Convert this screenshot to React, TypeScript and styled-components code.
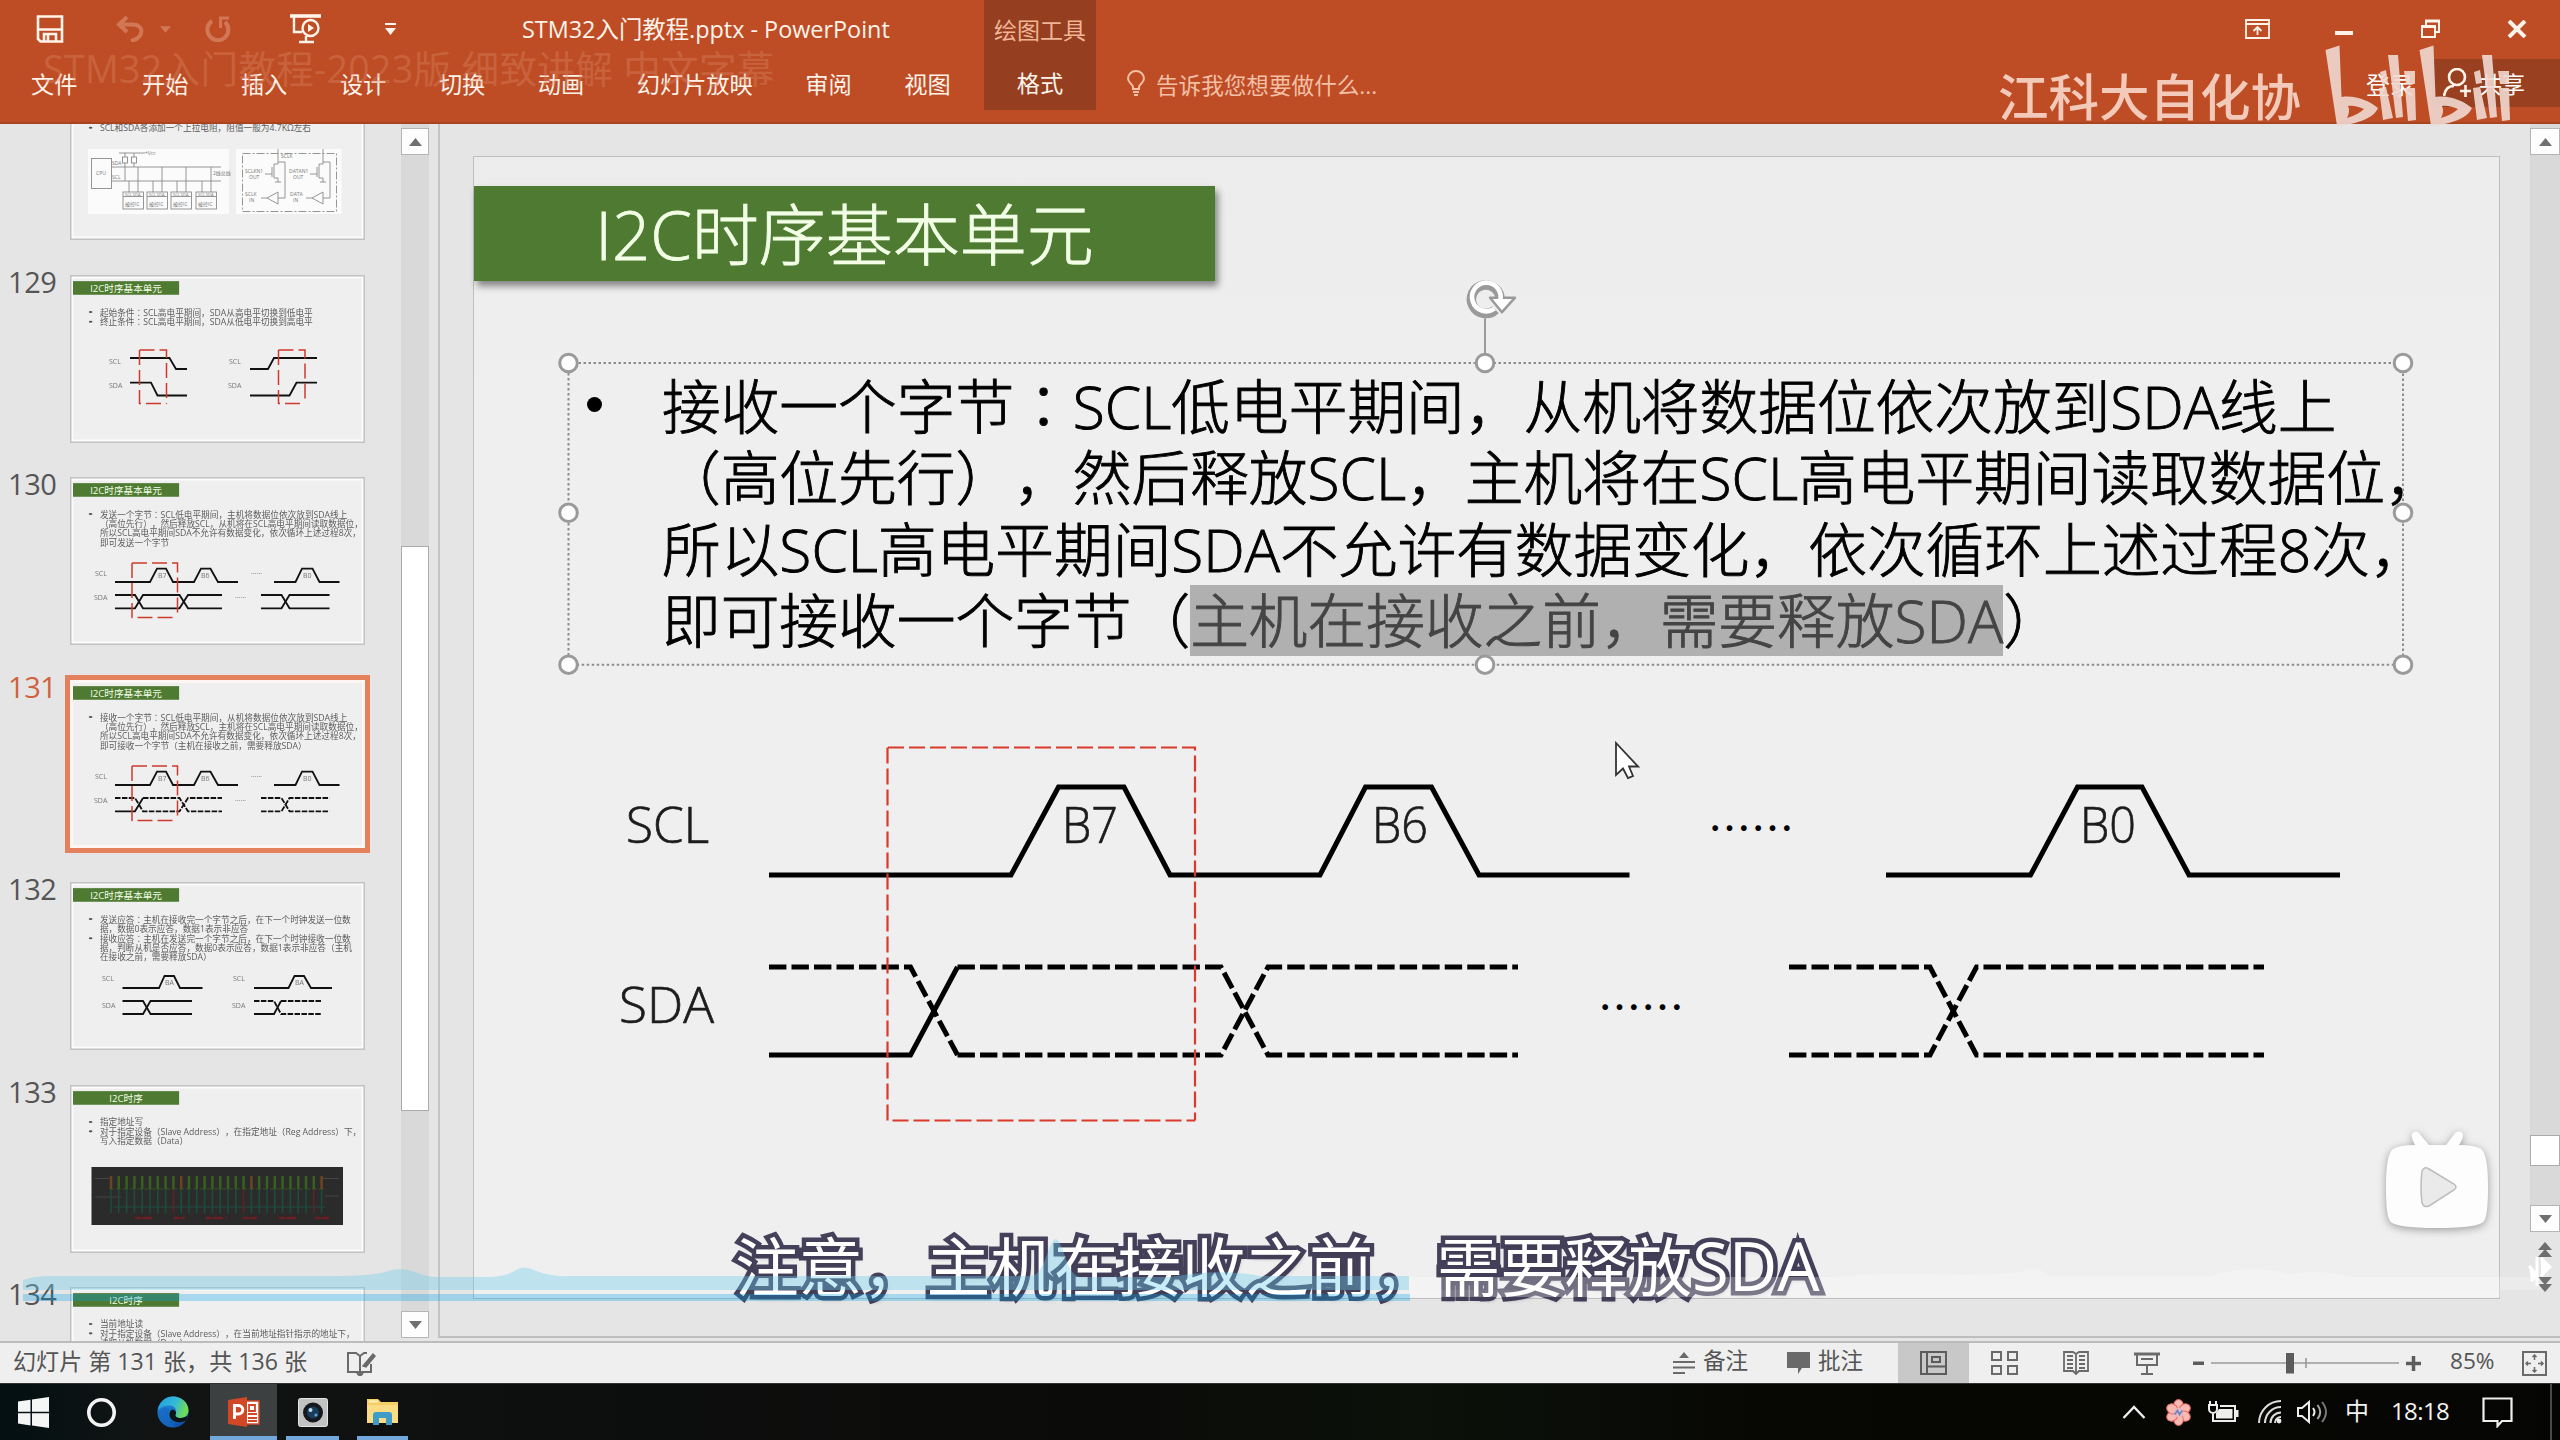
import React from 'react';
import styled, { createGlobalStyle, css } from 'styled-components';

const UI = `"Open Sans", "Noto Sans CJK SC", sans-serif`;

const Global = createGlobalStyle`
  * { box-sizing: border-box; }
  html, body { margin: 0; padding: 0; background: #e5e5e5; }
  body { font-family: ${UI}; text-spacing-trim: space-all; overflow: hidden; }
  svg { display: block; flex: none; }
`;

const Screen = styled.div`
  position: relative;
  width: 2560px;
  height: 1440px;
  display: flex;
  flex-direction: column;
  overflow: hidden;
  background: #e5e5e5;
`;

/* ---------- header ---------- */
const Header = styled.header`
  display: grid;
  grid-template-columns: 984px 112px 1fr;
  height: 124px;
  flex: none;
  background: #be4d25;
  border-bottom: 2px solid #a84420;
  color: #fff3ea;
`;
const HeaderColumn = styled.div`
  display: flex;
  flex-direction: column;
  min-width: 0;
`;
const TitleRow = styled.div`
  display: flex;
  align-items: center;
  height: 58px;
  padding-left: 36px;
`;
const QuickAccess = styled.div`
  display: flex;
  align-items: center;
  width: 486px;
`;
const QuickIcon = styled.div<{ $gap: number; $dim?: boolean }>`
  margin-right: ${p => p.$gap}px;
  opacity: ${p => (p.$dim ? 0.3 : 1)};
`;
const DocTitle = styled.div`
  font-size: 23.4px;
  line-height: 34px;
  padding-bottom: 1px;
  white-space: nowrap;
`;
const TabRow = styled.nav`
  display: flex;
  align-items: center;
  height: 50px;
  padding-left: 31px;
  gap: 52.6px;
`;
const Tab = styled.div<{ $after?: number }>`
  font-size: 23.2px;
  white-space: nowrap;
  margin-right: ${p => p.$after ?? 0}px;
`;
const ContextTab = styled.div`
  display: flex;
  flex-direction: column;
  align-items: center;
  height: 110px;
  background: #963e20;
`;
const ContextLabel = styled.div`
  height: 58px;
  line-height: 60px;
  font-size: 23px;
  color: #f0b597;
`;
const ContextName = styled.div`
  height: 50px;
  line-height: 50px;
  font-size: 23.2px;
`;
const WindowRow = styled.div`
  display: flex;
  justify-content: flex-end;
  align-items: center;
  height: 58px;
  padding-right: 33px;
`;
const WindowButton = styled.div<{ $gap: number }>`
  margin-right: ${p => p.$gap}px;
`;
const TellRow = styled.div`
  display: flex;
  align-items: center;
  height: 50px;
  padding-left: 29px;
  color: #f3bfa5;
  font-size: 22.6px;
`;
const TellText = styled.div`
  margin-left: 9px;
  padding-top: 2px;
  white-space: nowrap;
`;
const SignIn = styled.div`
  margin-left: auto;
  width: 66px;
  color: #fff;
  font-size: 24px;
`;
const Share = styled.div`
  display: flex;
  align-items: center;
  gap: 8px;
  width: 128px;
  height: 48px;
  padding-left: 11px;
  background: #98401f;
  color: #fff;
  font-size: 23px;
`;

/* ---------- workspace ---------- */
const Workspace = styled.main`
  display: flex;
  height: 1219px;
  flex: none;
  background: #e5e5e5;
  border-bottom: 2px solid #bcbcbc;
`;
const ThumbPane = styled.aside`
  width: 401px;
  flex: none;
  height: 100%;
  overflow: hidden;
`;
const ThumbList = styled.div`
  display: flex;
  flex-direction: column;
  margin-top: -52px;
`;
const ThumbRow = styled.div`
  display: flex;
  height: 202.5px;
  flex: none;
`;
const ThumbNumber = styled.div<{ $on?: boolean }>`
  width: 70px;
  padding-left: 8px;
  font-size: 29px;
  line-height: 14px;
  letter-spacing: -0.4px;
  color: ${p => (p.$on ? '#d0623f' : '#555')};
  flex: none;
`;
const ThumbFrame = styled.div<{ $on?: boolean }>`
  position: relative;
  width: 295px;
  height: 168px;
  flex: none;
  overflow: visible;
  padding: 2px 2px 2px 3px;
  background: #efefef;
  box-shadow: inset 0 0 0 1.5px #c2c2c2, inset 0 0 0 3.5px #fbfbfb;
  ${p =>
    p.$on &&
    css`
      box-shadow: inset 0 0 0 3px #fdf6f2, 0 0 0 5px #e4815c;
    `}
`;
const ThumbClip = styled.div`
  width: 290px;
  height: 163px;
  overflow: hidden;
`;
const ThumbScale = styled.div`
  width: 2026px;
  height: 1142px;
  transform: scale(0.1432);
  transform-origin: 0 0;
`;
const ThumbDrawing = styled.svg`
  position: absolute;
  left: 3px;
  top: 2px;
`;

const ScrollBar = styled.div<{ $w: number; $h: number }>`
  display: flex;
  flex-direction: column;
  width: ${p => p.$w}px;
  height: ${p => p.$h}px;
  flex: none;
  background: #d9d9d9;
  padding-top: 4px;
`;
const ScrollButton = styled.div`
  display: flex;
  align-items: center;
  justify-content: center;
  height: 27px;
  flex: none;
  background: #fdfdfd;
  border: 1.5px solid #b5b5b5;
`;
const ScrollThumb = styled.div<{ $before: number; $size: number }>`
  height: ${p => p.$size}px;
  margin-top: ${p => p.$before}px;
  margin-bottom: auto;
  flex: none;
  background: #fff;
  border: 1.5px solid #ababab;
`;

const Editor = styled.section`
  display: flex;
  flex: 1;
  margin-left: 9px;
  height: 1214px;
  border-left: 2px solid #c4c4c4;
  border-bottom: 2px solid #bdbdbd;
`;
const Stage = styled.div`
  flex: 1;
  padding: 32px 0 0 33px;
`;
const SlidePaper = styled.div`
  width: 2027px;
  height: 1143px;
  border: 1.5px solid #bfbfbf;
  background: linear-gradient(#ececec, #efefef 20%);
`;
const RightRail = styled.div`
  display: flex;
  flex-direction: column;
  align-items: center;
  width: 30px;
`;
const PageArrows = styled.div`
  margin-top: 10px;
`;

/* ---------- slide ---------- */
const SlideBox = styled.div`
  display: flex;
  flex-direction: column;
  width: 2025px;
  height: 1140px;
`;
const SlideTitle = styled.div<{ $mini?: boolean }>`
  margin-top: 29px;
  width: 741px;
  height: 95px;
  flex: none;
  background: #4f7a32;
  box-shadow: ${p => (p.$mini ? 'none' : '3px 5px 7px rgba(0,0,0,0.45)')};
  color: #f2ffe6;
  font-size: 67px;
  line-height: 97px;
  font-weight: ${p => (p.$mini ? 400 : 300)};
  -webkit-text-stroke: ${p => (p.$mini ? 0 : 0.8)}px #f2ffe6;
  text-align: center;
  white-space: nowrap;
`;
const BodyBox = styled.div`
  position: relative;
  margin: 82px 0 0 94px;
  padding: 5px 0 0 94px;
  width: 1836px;
  height: 302px;
  flex: none;
`;
const Paragraph = styled.div<{ $mini?: boolean }>`
  position: relative;
  font-size: ${p => (p.$mini ? 60.4 : 58.7)}px;
  line-height: ${p => (p.$mini ? 65.3 : 71.3)}px;
  font-weight: ${p => (p.$mini ? 400 : 300)};
  color: ${p => (p.$mini ? '#5c5c5c' : '#000')};
  -webkit-text-stroke: ${p => (p.$mini ? '0' : '0.9px currentColor')};
  white-space: nowrap;
`;
const BulletDot = styled.span<{ $mini?: boolean }>`
  position: absolute;
  left: ${p => (p.$mini ? -78 : -75)}px;
  top: ${p => (p.$mini ? 26 : 29)}px;
  width: ${p => (p.$mini ? 26 : 15)}px;
  height: 15px;
  border-radius: 50%;
  background: ${p => (p.$mini ? '#555' : '#000')};
`;
const Line = styled.div``;
const Colon = styled.span`
  font-family: "Noto Sans CJK JP", sans-serif;
`;
const Highlight = styled.span`
  display: inline-block;
  height: 71px;
  background: #b0b0b0;
  color: #444;
  vertical-align: top;
`;
const SelectionFrame = styled.svg`
  position: absolute;
  left: -20px;
  top: -90px;
`;

const mark = (text: string) =>
  text.split('：').flatMap((part, i) => (i ? [<Colon key={i}>：</Colon>, part] : [part]));

type SlideProps = { title: string; items: React.ReactNode[][]; mini?: boolean; children?: React.ReactNode; frame?: React.ReactNode };
const Slide = ({ title, items, mini, children, frame }: SlideProps) => (
  <SlideBox>
    <SlideTitle $mini={mini}>{title}</SlideTitle>
    <BodyBox>
      {items.map((lines, i) => (
        <Paragraph key={i} $mini={mini}>
          <BulletDot $mini={mini} />
          {lines.map((l, j) => (
            <Line key={j}>{typeof l === 'string' ? mark(l) : l}</Line>
          ))}
        </Paragraph>
      ))}
      {frame}
    </BodyBox>
    {children}
  </SlideBox>
);

const handles = [
  [568.5, 362.8], [1485, 362.8], [2403, 362.8],
  [568.5, 512.6], [2403, 512.6],
  [568.5, 664.5], [1485, 664.5], [2403, 664.5],
];
const Frame = () => (
  <SelectionFrame width="1880" height="420" viewBox="548 272.8 1880 420" fill="none">
    <rect x="568.5" y="362.8" width="1834.5" height="301.7" stroke="#8d8d8d" strokeWidth="2" strokeDasharray="2.5 2.5" />
    <path d="M1485 318V354" stroke="#9a9a9a" strokeWidth="2" />
    <path d="M1500 300A14.300 14.300 0 1 0 1495.500 309.500" stroke="#9a9a9a" strokeWidth="9.500" />
    <path d="M1490 297.500H1515L1502 312Z" fill="#fff" stroke="#9a9a9a" strokeWidth="2.500" strokeLinejoin="round" />
    <path d="M1500 301A14.300 14.300 0 1 0 1494.500 308.500" stroke="#fff" strokeWidth="4.600" />
    {handles.map(([x, y], i) => (
      <circle key={i} cx={x} cy={y} r="8.8" fill="#fff" stroke="#9a9a9a" strokeWidth="3" />
    ))}
  </SelectionFrame>
);

const WaveLabel = styled.text`
  font-family: ${UI};
  font-weight: 300;
  font-size: 50px;
  fill: #1c1c1c;
  stroke: #1c1c1c;
  stroke-width: 0.7px;
`;
const Dots = styled.text`
  font-family: "Noto Sans CJK SC", sans-serif;
  font-size: 43px;
  fill: #000;
`;
const Timing = () => (
  <svg width="2025" height="632" viewBox="474 664.5 2025 632" fill="none" stroke="#000" strokeWidth="5">
    <g stroke="none">
      <WaveLabel x="626" y="842" textLength="83" lengthAdjust="spacingAndGlyphs">SCL</WaveLabel>
      <WaveLabel x="619" y="1022" textLength="95" lengthAdjust="spacingAndGlyphs">SDA</WaveLabel>
      <WaveLabel x="1062" y="842" textLength="56" lengthAdjust="spacingAndGlyphs">B7</WaveLabel>
      <WaveLabel x="1372" y="842" textLength="56" lengthAdjust="spacingAndGlyphs">B6</WaveLabel>
      <WaveLabel x="2080" y="842" textLength="56" lengthAdjust="spacingAndGlyphs">B0</WaveLabel>
      <Dots x="1708" y="844">……</Dots>
      <Dots x="1598" y="1023">……</Dots>
    </g>
    <path d="M769 874.5H1011L1058.5 786.5H1124L1170 874.5H1320L1365.5 786.5H1431.5L1479 874.5H1629.5" />
    <path d="M1886 874.5H2030.5L2077.5 786.5H2142L2189 874.5H2340" />
    <path d="M769 1054.5H910.5L957.5 966.5" />
    <g strokeDasharray="17.4 5.1">
      <path d="M769 966.5H910.5L957.5 1054.5" />
      <path d="M957.5 966.5H1221L1268 1054.5H1518" />
      <path d="M957.5 1054.5H1221L1268 966.5H1518" />
      <path d="M1789 966.5H1930L1976.5 1054.5H2264" />
      <path d="M1789 1054.5H1930L1976.5 966.5H2264" />
    </g>
    <g stroke="#d93a2c" strokeWidth="2.2" strokeDasharray="16 5">
      <path d="M888 747H1195V1120" />
      <path d="M887.5 747V1120H1195" />
    </g>
  </svg>
);

/* ---------- thumbnail drawings, in thumbnail pixels ---------- */
const MiniLabel = styled.text<{ $size?: number }>`
  font-family: ${UI};
  font-size: ${p => p.$size ?? 7}px;
  fill: #777;
`;
type MiniText = [number, number, string];
const Mini = ({ lines = [], dashed = [], red = [], labels = [], children }: {
  lines?: string[]; dashed?: string[]; red?: number[][]; labels?: MiniText[]; children?: React.ReactNode;
}) => (
  <ThumbDrawing width="290" height="164" viewBox="0 0 290 164" fill="none">
    {labels.map(([x, y, t], i) => <MiniLabel key={i} x={x} y={y}>{t}</MiniLabel>)}
    {lines.map((d, i) => <path key={i} d={d} stroke="#111" strokeWidth="1.8" />)}
    {dashed.map((d, i) => <path key={i} d={d} stroke="#111" strokeWidth="1.8" strokeDasharray="5.5 1.4" />)}
    {red.map(([x, y, w, h], i) => (
      <g key={i} stroke="#d03a2c" strokeWidth="1.5" strokeDasharray="15 5">
        <path d={`M${x} ${y}H${x + w}V${y + h}`} />
        <path d={`M${x} ${y}V${y + h}H${x + w}`} />
      </g>
    ))}
    {children}
  </ThumbDrawing>
);

const sclLong = [
  'M42 103H77L84 89.7H93L100 103H121L128 89.7H137.5L145 103H165',
  'M201 103H222.5L229 89.7H239.5L246.5 103H266.5',
];
const longLabels: MiniText[] = [
  [22, 97, 'SCL'], [21, 121, 'SDA'], [85, 99, 'B7'], [128, 99, 'B6'], [230, 99, 'B0'], [178, 95, '……'], [162, 119, '……'],
];

const Draw128 = () => (
  <Mini>
    <rect x="15" y="75" width="141" height="65" fill="#fbfbfb" />
    <rect x="163" y="75" width="105.5" height="65" fill="#fbfbfb" />
    <g stroke="#8a8a8a" strokeWidth="0.9">
      <rect x="18.5" y="84.5" width="20" height="30" />
      <path d="M38 93H148M38 107H148M46 79H72M52 79V107M61 79V93" />
      <rect x="49.5" y="83" width="5" height="6" fill="#fbfbfb" />
      <rect x="58.5" y="83" width="5" height="6" fill="#fbfbfb" />
      {[50, 74, 98, 123].map(x => (
        <g key={x}>
          <rect x={x} y="118" width="20.5" height="17" />
          <path d={`M${x + 6} 107V118M${x + 15} 93V118M${x} 122.5H${x + 20}`} />
        </g>
      ))}
      <rect x="169.5" y="79.5" width="94" height="58" strokeDasharray="8 2 2 2" />
      {[0, 45].map(x => (
        <path key={x} d={`M${205 + x} 75V90H${201 + x}V104H${205 + x}V108M${192 + x} 100H${199 + x}M${199 + x} 93V103M${205 + x} 88H${212 + x}V124H${205 + x}M${205 + x} 118L${194 + x} 124L${205 + x} 130ZM${194 + x} 124H${188 + x}M${202 + x} 108H${208 + x}`} />
      ))}
    </g>
    {([[23, 101, 'CPU'], [39, 91, 'SDA'], [39, 105, 'SCL'], [72, 81, '+Vcc'], [140, 101, '2线总线']] as MiniText[]).map(([x, y, t], i) => (
      <MiniLabel key={i} x={x} y={y} $size={5}>{t}</MiniLabel>
    ))}
    {[50, 74, 98, 123].map(x => (
      <React.Fragment key={x}>
        <MiniLabel x={x + 2} y={122} $size={4}>SCL SDA</MiniLabel>
        <MiniLabel x={x + 2} y={132} $size={5}>被控IC</MiniLabel>
      </React.Fragment>
    ))}
    {([[172, 99, 'SCLKN1'], [176, 105, 'OUT'], [216, 99, 'DATAN1'], [220, 105, 'OUT'], [172, 122, 'SCLK'], [176, 128, 'IN'], [217, 122, 'DATA'], [220, 128, 'IN'], [208, 84, 'SCLK']] as MiniText[]).map(([x, y, t], i) => (
      <MiniLabel key={i} x={x} y={y} $size={5}>{t}</MiniLabel>
    ))}
  </Mini>
);

const Draw129 = () => (
  <Mini
    labels={[[36, 86.5, 'SCL'], [36, 110.5, 'SDA'], [156, 86.5, 'SCL'], [155, 110.5, 'SDA']]}
    lines={['M57 81H96.5L103 92H114', 'M57 105.7H78L84.5 118.5H114', 'M177 92H195L201 81H244', 'M177 118.5H216.5L223.5 105.7H244']}
    red={[[66.5, 73, 27, 53.5], [205.5, 73, 26.5, 53.5]]}
  />
);
const Draw130 = () => (
  <Mini
    labels={longLabels}
    lines={[
      ...sclLong,
      'M42 116H62L70 129.3H106.5L115 116H149', 'M42 129.3H62L70 116H106.5L115 129.3H149',
      'M188 116H208.5L216.5 129.3H256.5', 'M188 129.3H208.5L216.5 116H256.5',
    ]}
    red={[[59, 84, 45.5, 54.5]]}
  />
);
const Draw131 = () => (
  <Mini
    labels={longLabels}
    lines={[...sclLong, 'M42 129.3H62L70 116']}
    dashed={[
      'M42 116H62L70 129.3H106.5L115 116H149', 'M70 116H106.5L115 129.3H149',
      'M188 116H208.5L216.5 129.3H256.5', 'M188 129.3H208.5L216.5 116H256.5',
    ]}
    red={[[59, 84, 45.5, 54.5]]}
  />
);
const Draw132 = () => (
  <Mini
    labels={[[29, 97, 'SCL'], [29, 123.5, 'SDA'], [160, 97, 'SCL'], [159, 123.5, 'SDA'], [92, 101, 'BA'], [222, 101, 'BA']]}
    lines={[
      'M49.5 104H86L91.5 92H101L107 104H129.5', 'M181 104H215.5L221.5 92H231L238 104H259',
      'M49.5 117H70L77.5 130H119', 'M49.5 130H70L77.5 117H119', 'M181 130H201L208 117',
    ]}
    dashed={['M181 117H201L208 130H248', 'M208 117H248']}
  />
);
const ticks = Array.from({ length: 28 }, (_, i) => 38 + i * 7.8);
const Draw133 = () => (
  <Mini>
    <rect x="18.5" y="80" width="251.5" height="58" fill="#2b2b2c" />
    <path d="M22 91.5H36M250 91.5H266M22 110H48M252 109H266" stroke="#454545" />
    <path d="M36 102H252" stroke="#35521f" strokeDasharray="5 2" />
    <path d="M40 120H252" stroke="#1c4f42" strokeWidth="1.2" />
    {ticks.map((x, i) => (
      <g key={i}>
        <path d={`M${x} 89V102`} stroke={i % 9 === 0 ? '#6b4520' : '#38601f'} strokeWidth="2.5" />
        <path d={`M${x} 102V126`} stroke={i % 9 === 8 ? '#5a2525' : '#1c4c3a'} strokeWidth="1.6" />
      </g>
    ))}
    <path d="M62 131H82M101 131H112M133 131H154M170 131H184M206 131H226M242 131H256" stroke="#6b1f22" strokeWidth="2.5" strokeDasharray="6 1 10 3" />
  </Mini>
);

const T = 'I2C时序基本单元';
const thumbs: { n: string; title: string; items: string[][]; draw?: React.ReactNode; on?: boolean }[] = [
  { n: '128', title: 'I2C硬件电路', items: [['所有I2C设备的SCL连在一起，SDA连在一起'], ['设备的SCL和SDA均要配置成开漏输出模式'], ['SCL和SDA各添加一个上拉电阻，阻值一般为4.7KΩ左右']], draw: <Draw128 /> },
  { n: '129', title: T, items: [['起始条件：SCL高电平期间，SDA从高电平切换到低电平'], ['终止条件：SCL高电平期间，SDA从低电平切换到高电平']], draw: <Draw129 /> },
  { n: '130', title: T, items: [['发送一个字节：SCL低电平期间，主机将数据位依次放到SDA线上', '（高位先行），然后释放SCL，从机将在SCL高电平期间读取数据位，', '所以SCL高电平期间SDA不允许有数据变化，依次循环上述过程8次，', '即可发送一个字节']], draw: <Draw130 /> },
  { n: '131', title: T, items: [['接收一个字节：SCL低电平期间，从机将数据位依次放到SDA线上', '（高位先行），然后释放SCL，主机将在SCL高电平期间读取数据位，', '所以SCL高电平期间SDA不允许有数据变化，依次循环上述过程8次，', '即可接收一个字节（主机在接收之前，需要释放SDA）']], draw: <Draw131 />, on: true },
  { n: '132', title: T, items: [['发送应答：主机在接收完一个字节之后，在下一个时钟发送一位数', '据，数据0表示应答，数据1表示非应答'], ['接收应答：主机在发送完一个字节之后，在下一个时钟接收一位数', '据，判断从机是否应答，数据0表示应答，数据1表示非应答（主机', '在接收之前，需要释放SDA）']], draw: <Draw132 /> },
  { n: '133', title: 'I2C时序', items: [['指定地址写'], ['对于指定设备（Slave Address），在指定地址（Reg Address）下，', '写入指定数据（Data）']], draw: <Draw133 /> },
  { n: '134', title: 'I2C时序', items: [['当前地址读'], ['对于指定设备（Slave Address），在当前地址指针指示的地址下，', '读取从机数据（Data）']] },
];

/* ---------- status bar ---------- */
const StatusBar = styled.footer`
  display: flex;
  align-items: center;
  height: 40px;
  flex: none;
  padding: 0 13px;
  background: #efefef;
  color: #555;
  font-size: 22.6px;
  white-space: nowrap;
`;
const StatusText = styled.div<{ $w: number }>`
  width: ${p => p.$w}px;
  line-height: 30px;
  padding-bottom: 5px;
  font-size: 23.1px;
`;
const Spring = styled.div`
  flex: 1;
`;
const StatusItem = styled.div<{ $w: number; $indent?: number }>`
  display: flex;
  align-items: center;
  gap: 8px;
  width: ${p => p.$w}px;
  padding-left: ${p => p.$indent ?? 0}px;
`;
const StatusLabel = styled.span`
  line-height: 30px;
  padding-bottom: 5px;
`;
const ViewButton = styled.div<{ $on?: boolean }>`
  display: flex;
  align-items: center;
  justify-content: center;
  width: 71px;
  height: 40px;
  background: ${p => (p.$on ? '#c8c8c8' : 'transparent')};
`;

/* ---------- taskbar ---------- */
const Taskbar = styled.div`
  display: flex;
  align-items: center;
  height: 57px;
  flex: none;
  border-top: 1px solid #333;
  background: linear-gradient(90deg, #031012 0, #121414 150px, #0d0f0e 560px, #0b0b09 1100px, #0c110a 1420px, #070704 1800px, #050503);
  color: #f2f2f2;
`;
const TaskItem = styled.div<{ $w: number; $state?: 'open' | 'active' }>`
  position: relative;
  display: flex;
  align-items: center;
  justify-content: center;
  width: ${p => p.$w}px;
  height: 56px;
  background: ${p => (p.$state === 'active' ? '#3c4040' : 'transparent')};
  &::after {
    content: '';
    display: ${p => (p.$state ? 'block' : 'none')};
    position: absolute;
    left: ${p => (p.$state === 'active' ? 0 : 9)}px;
    right: ${p => (p.$state === 'active' ? 0 : 9)}px;
    bottom: 0;
    height: 4px;
    background: #73a8dc;
  }
`;
const Tray = styled.div`
  display: flex;
  align-items: center;
  margin-left: auto;
  height: 56px;
  padding-right: 8px;
`;
const TrayIcon = styled.div<{ $w: number }>`
  display: flex;
  width: ${p => p.$w}px;
`;
const TrayText = styled.div<{ $w: number }>`
  width: ${p => p.$w}px;
  font-size: 24px;
  line-height: 48px;
  padding-bottom: 2px;
  letter-spacing: -0.6px;
`;
const ShowDesktop = styled.div`
  width: 2px;
  height: 56px;
  background: #4a4a46;
`;

/* ---------- video overlay ---------- */
const GhostTitle = styled.div`
  position: absolute;
  left: 43px;
  top: 42px;
  font-size: 37.6px;
  line-height: 54px;
  color: #d98565;
  opacity: 0.38;
  white-space: nowrap;
  letter-spacing: 0.3px;
`;
const Uploader = styled.div`
  position: absolute;
  left: 1998px;
  top: 60px;
  font-size: 50.5px;
  line-height: 74px;
  font-weight: 500;
  color: #f3c9ba;
  white-space: nowrap;
`;
const BiliLogo = styled.svg`
  position: absolute;
  left: 2320px;
  top: 38px;
`;
const Subtitle = styled.div`
  position: absolute;
  left: 735px;
  top: 1216px;
  font-size: 63.8px;
  line-height: 98px;
  color: #fff;
  -webkit-text-stroke: 9px #45415a;
  paint-order: stroke fill;
  text-shadow: 2px 3px 4px rgba(60, 55, 80, 0.5);
  white-space: nowrap;
`;
const SubtitleLatin = styled.span`
  font-size: 67px;
`;
const Progress = styled.svg`
  position: absolute;
  left: 0;
  top: 1220px;
`;
const PlayBadge = styled.svg`
  position: absolute;
  left: 2370px;
  top: 1120px;
  filter: drop-shadow(0 2px 4px rgba(0, 0, 0, 0.35));
`;
const Cursor = styled.svg`
  position: absolute;
  left: 1614px;
  top: 740px;
`;

const Arrow = ({ up, w = 13, h = 8 }: { up?: boolean; w?: number; h?: number }) => (
  <svg width={w} height={h} viewBox="0 0 10 6"><path d={up ? 'M0 6L5 0L10 6Z' : 'M0 0L5 6L10 0Z'} fill="#6f6f6f" /></svg>
);

const HeaderBar = () => (
  <Header>
    <HeaderColumn>
      <TitleRow>
        <QuickAccess>
          <QuickIcon $gap={52}>
            <svg width="28" height="28" viewBox="0 0 28 28" fill="none" stroke="#fff3ea" strokeWidth="2.6"><path d="M2 1.5H26V26.5H4.5L2 24Z" /><path d="M2 14.5H26M8 26V19H20V26" /><path d="M12 20V26" /></svg>
          </QuickIcon>
          <QuickIcon $gap={14} $dim>
            <svg width="30" height="26" viewBox="0 0 30 26" fill="none" stroke="#ffd9c4" strokeWidth="4"><path d="M11 1L3 8.5L11 16M3 8.5H17C29 9 28 22 15 25" /></svg>
          </QuickIcon>
          <QuickIcon $gap={34} $dim><svg width="11" height="7" viewBox="0 0 10 6"><path d="M0 0L5 6L10 0Z" fill="#ffd9c4" /></svg></QuickIcon>
          <QuickIcon $gap={59} $dim>
            <svg width="26" height="26" viewBox="0 0 26 26" fill="none" stroke="#ffd9c4" strokeWidth="4"><path d="M7 5A10.5 10.5 0 1 0 20 6" /><path d="M14 2H24M15.5 2V12" strokeWidth="3" /></svg>
          </QuickIcon>
          <QuickIcon $gap={64}>
            <svg width="31" height="30" viewBox="0 0 31 30" fill="none" stroke="#fff3ea" strokeWidth="2.4"><path d="M0 2H31" strokeWidth="3.6" /><path d="M4 3V18H12" /><circle cx="20.5" cy="14" r="8" /><path d="M18 10V18L24 14Z" fill="#fff3ea" stroke="none" /><path d="M16 22V27M9 28H24" /></svg>
          </QuickIcon>
          <QuickIcon $gap={0}><svg width="11" height="12" viewBox="0 0 11 12"><path d="M0 0H11V2H0ZM0 5H11L5.5 12Z" fill="#fff3ea" /></svg></QuickIcon>
        </QuickAccess>
        <DocTitle>STM32入门教程.pptx - PowerPoint</DocTitle>
      </TitleRow>
      <TabRow>
        <Tab $after={12}>文件</Tab>
        {['开始', '插入', '设计', '切换', '动画', '幻灯片放映', '审阅', '视图'].map(t => <Tab key={t}>{t}</Tab>)}
      </TabRow>
    </HeaderColumn>
    <ContextTab>
      <ContextLabel>绘图工具</ContextLabel>
      <ContextName>格式</ContextName>
    </ContextTab>
    <HeaderColumn>
      <WindowRow>
        <WindowButton $gap={65}><svg width="25" height="20" viewBox="0 0 25 20" fill="none" stroke="#fff3ea" strokeWidth="1.8"><path d="M1 1H24V19H1ZM1 5H24M12.5 16V9M8.5 12L12.5 8L16.5 12" /></svg></WindowButton>
        <WindowButton $gap={68}><svg width="18" height="20" viewBox="0 0 18 20"><path d="M0 12H18V16H0Z" fill="#fff3ea" /></svg></WindowButton>
        <WindowButton $gap={67}><svg width="19" height="20" viewBox="0 0 19 20" fill="none" stroke="#fff3ea" strokeWidth="2"><path d="M1 7H14V18H1ZM5 6V1.5H18V13H15" /><path d="M1 8H14M5 2.5H18" /></svg></WindowButton>
        <WindowButton $gap={0}><svg width="20" height="18" viewBox="0 0 20 18" stroke="#fff3ea" strokeWidth="4"><path d="M2 1L18 17M18 1L2 17" /></svg></WindowButton>
      </WindowRow>
      <TellRow>
        <svg width="22" height="27" viewBox="0 0 22 27" fill="none" stroke="#f3bfa5" strokeWidth="2"><path d="M8 19V17C8 14 3 13 3 8.5A8 7.5 0 0 1 19 8.5C19 13 14 14 14 17V19ZM8 22H14M9 25H13" /></svg>
        <TellText>告诉我您想要做什么...</TellText>
        <SignIn>登录</SignIn>
        <Share>
          <svg width="28" height="30" viewBox="0 0 28 30" fill="none" stroke="#fff3ea" strokeWidth="2.6"><circle cx="14" cy="9" r="8" /><path d="M1 28C2 21 6 18 11 18M17 23H28M22.5 17V29" /></svg>
          共享
        </Share>
      </TellRow>
    </HeaderColumn>
  </Header>
);

const Status = () => (
  <StatusBar>
    <StatusText $w={334}>幻灯片 第 131 张，共 136 张</StatusText>
    <svg width="29" height="25" viewBox="0 0 29 25" fill="none" stroke="#6a6a6a" strokeWidth="2"><path d="M13 21H1V2H9L13 5L17 2H20M13 5V24M10 22L13 25L16 22M13 21H24V13" /><path d="M16 15L26 3L28 5L19 16Z" fill="#6a6a6a" strokeWidth="1.5" /></svg>
    <Spring />
    <StatusItem $w={114}>
      <svg width="22" height="22" viewBox="0 0 22 22" fill="#6a6a6a"><path d="M6 6L11 0L16 6ZM0 9H22V11H0ZM0 14.5H22V16.5H0ZM0 20H12V22H0Z" /></svg>
      <StatusLabel>备注</StatusLabel>
    </StatusItem>
    <StatusItem $w={111}>
      <svg width="23" height="22" viewBox="0 0 23 22"><path d="M0 0H23V16H15L11 22V16H0Z" fill="#6a6a6a" /></svg>
      <StatusLabel>批注</StatusLabel>
    </StatusItem>
    <ViewButton $on><svg width="27" height="24" viewBox="0 0 27 24" fill="none" stroke="#5c5c5c" strokeWidth="2"><path d="M1 1H26V23H1ZM7 1V23M7 15.5H26M12 6H20V11H12Z" /></svg></ViewButton>
    <ViewButton><svg width="27" height="24" viewBox="0 0 27 24" fill="none" stroke="#6a6a6a" strokeWidth="2"><path d="M1 1H10V9H1ZM17 1H26V9H17ZM1 15H10V23H1ZM17 15H26V23H17Z" /></svg></ViewButton>
    <ViewButton><svg width="26" height="24" viewBox="0 0 26 24" fill="none" stroke="#6a6a6a" strokeWidth="1.8"><path d="M13 3L10 1H1V20H10L13 23L16 20H25V1H16L13 3V23M4 5H10M4 9H10M4 13H10M4 17H10M16 5H22M16 9H22M16 13H22M16 17H22" /></svg></ViewButton>
    <ViewButton><svg width="26" height="23" viewBox="0 0 26 23" fill="none" stroke="#6a6a6a" strokeWidth="2"><path d="M0 2H26" strokeWidth="3" /><path d="M3 2V13H23V2M7 7H19M13 13V21M7 22H19" /></svg></ViewButton>
    <svg width="240" height="24" viewBox="2182 0 240 24"><path d="M2193 10.5H2204V14H2193Z" fill="#5c5c5c" /><path d="M2211 12H2399M2306 7V17" stroke="#9a9a9a" strokeWidth="1.6" /><path d="M2286 2H2294V22.5H2286Z" fill="#5c5c5c" /><path d="M2406 12.5H2421M2413.5 5V20" stroke="#5c5c5c" strokeWidth="3.5" /></svg>
    <StatusItem $w={100} $indent={28}><StatusLabel>85%</StatusLabel></StatusItem>
    <svg width="25" height="25" viewBox="0 0 25 25" fill="none" stroke="#6a6a6a" strokeWidth="2"><path d="M1 1H24V24H1Z" /><path d="M12.5 3.5V9M12.5 16V21.5M3.5 12.5H9M16 12.5H21.5M10.5 6L12.5 4L14.5 6M10.5 19L12.5 21L14.5 19M6 10.5L4 12.5L6 14.5M19 10.5L21 12.5L19 14.5" strokeWidth="1.5" /></svg>
  </StatusBar>
);

const Tasks = () => (
  <Taskbar>
    <TaskItem $w={67}><svg width="31" height="31" viewBox="0 0 31 31"><path d="M0 4.5L12.5 2.7V14.8H0ZM14 2.5L31 0V14.8H14ZM0 16.3H12.5V28.4L0 26.6ZM14 16.3H31V31L14 28.6Z" fill="#f4f6f6" /></svg></TaskItem>
    <TaskItem $w={68}><svg width="31" height="31" viewBox="0 0 31 31" fill="none"><circle cx="15.5" cy="15.5" r="12.7" stroke="#f4f4f4" strokeWidth="3.6" /></svg></TaskItem>
    <TaskItem $w={75}>
      <svg width="32" height="32" viewBox="0 0 32 32">
        <defs>
          <linearGradient id="eg" x1="0" y1="0" x2="1" y2="0.3"><stop offset="0" stopColor="#1fa0e0" /><stop offset="0.6" stopColor="#35b8d8" /><stop offset="1" stopColor="#6ddc56" /></linearGradient>
          <linearGradient id="eb" x1="0" y1="0" x2="0.7" y2="1"><stop offset="0" stopColor="#2a9be6" /><stop offset="1" stopColor="#0d4fa8" /></linearGradient>
        </defs>
        <circle cx="16" cy="16" r="15.5" fill="url(#eb)" />
        <path d="M1 14C3 5 9 0.5 16 0.5C25 0.5 31.5 7 31.5 14.5C31.5 19 28 22 23.5 22C20 22 18 20.5 18.5 18.5C20 16.5 19.5 10 13 9.5C8 9.2 3 11 1 14Z" fill="url(#eg)" />
        <path d="M18.5 18.5C18 20.5 20 22 23.5 22C27 22 29 21 30.5 19.5L29.5 24C26 27 17 27.5 13.5 22C11.5 18.5 12.5 15 15 13.5C18.5 14 20 16.5 18.5 18.5Z" fill="#0b1416" />
        <path d="M13 13.5C9 17 10 27 19 31C10 32.5 1 26 0.6 16C4 11 10 10 13 13.5Z" fill="#1565c0" opacity="0.7" />
      </svg>
    </TaskItem>
    <TaskItem $w={67} $state="active">
      <svg width="32" height="30" viewBox="0 0 32 30"><path d="M16 4H31V27H16Z" fill="#fff" stroke="#d24726" strokeWidth="1.5" /><path d="M21 8H27V14H21ZM20 17H29M20 21H29M20 24H29" stroke="#d24726" strokeWidth="1.8" fill="none" /><path d="M0 3L19 0V30L0 27Z" fill="#d24726" /><path d="M6.5 22V8.5H10.5A4 4 0 0 1 10.5 17H7" stroke="#fff" strokeWidth="3" fill="none" /></svg>
    </TaskItem>
    <TaskItem $w={71} $state="open">
      <svg width="30" height="29" viewBox="0 0 30 29"><rect x="0.5" y="0.5" width="29" height="28" rx="2" fill="#c2c2c2" stroke="#e4e4e4" /><circle cx="15" cy="14.5" r="10" fill="#15181c" /><circle cx="15" cy="14.5" r="6" fill="#1a3c5a" /><circle cx="12.500" cy="12" r="2" fill="#b8dff5" /><circle cx="18" cy="17" r="1.600" fill="#5aa4d0" /></svg>
    </TaskItem>
    <TaskItem $w={69} $state="open">
      <svg width="32" height="28" viewBox="0 0 32 28"><path d="M0 1H11L14 4H31V25H0Z" fill="#f5cf63" /><path d="M2 2.5H11V4.5H2Z" fill="#fff3c0" /><path d="M0 7H31V25H0Z" fill="#fbdc85" /><path d="M6 27V17Q6 14 9 14H22Q25 14 25 17V27H19V20H12V27Z" fill="#3d9cc8" /></svg>
    </TaskItem>
    <Tray>
      <TrayIcon $w={43}><svg width="24" height="14" viewBox="0 0 24 14" fill="none" stroke="#eee" strokeWidth="2.4"><path d="M1.5 13L12 2L22.5 13" /></svg></TrayIcon>
      <TrayIcon $w={43}><svg width="27" height="27" viewBox="0 0 28 28"><g fill="#f7b9b2" stroke="#e0665c" strokeWidth="1">{[0, 60, 120, 180, 240, 300].map(a => <ellipse key={a} cx="14" cy="6.5" rx="5" ry="6" transform={`rotate(${a} 14 14)`} />)}</g><circle cx="14" cy="14" r="5" fill="#e6b6c0" /><path d="M10 16L13 12L15 16L18 12" stroke="#6a7fc0" strokeWidth="1.6" fill="none" /></svg></TrayIcon>
      <TrayIcon $w={50}><svg width="31" height="22" viewBox="0 0 31 22" fill="none" stroke="#eee" strokeWidth="2"><path d="M2 0V4M8 0V4M1 4H9V8A4 4 0 0 1 1 8ZM5 12V20H12M12 5H27V20H10" /><path d="M11 8H24.5V17.5H8V12Z" fill="#eee" stroke="none" /><path d="M29 9V16" strokeWidth="3" /></svg></TrayIcon>
      <TrayIcon $w={39}><svg width="24" height="24" viewBox="0 0 24 24" fill="none" stroke="#ddd" strokeWidth="2"><path d="M1 23A22 22 0 0 1 23 1M7 23A16 16 0 0 1 23 7M12.5 23A10.5 10.5 0 0 1 23 12.5" /><path d="M17 23A6 6 0 0 1 23 17" /><circle cx="21" cy="21" r="2.4" fill="#eee" stroke="none" /></svg></TrayIcon>
      <TrayIcon $w={48}><svg width="32" height="24" viewBox="0 0 32 24" fill="none" stroke="#eee" strokeWidth="2"><path d="M1 8H5L12 2V22L5 16H1Z" /><path d="M16 8Q19 12 16 16" /><path d="M20.5 5Q26 12 20.5 19" stroke="#aaa" /><path d="M25 2Q33 12 25 22" stroke="#777" /></svg></TrayIcon>
      <TrayText $w={46}>中</TrayText>
      <TrayText $w={91}>18:18</TrayText>
      <TrayIcon $w={68}><svg width="31" height="31" viewBox="0 0 31 31" fill="none" stroke="#eee" strokeWidth="2.2"><path d="M1.5 1.5H29.5V24H20L15.5 29V24H1.5Z" /></svg></TrayIcon>
      <ShowDesktop />
    </Tray>
  </Taskbar>
);

const App = () => (
  <>
    <Global />
    <Screen>
      <HeaderBar />
      <Workspace>
        <ThumbPane>
          <ThumbList>
            {thumbs.map(t => (
              <ThumbRow key={t.n}>
                <ThumbNumber $on={t.on}>{t.n}</ThumbNumber>
                <ThumbFrame $on={t.on}>
                  <ThumbClip><ThumbScale><Slide mini title={t.title} items={t.items} /></ThumbScale></ThumbClip>
                  {t.draw}
                </ThumbFrame>
              </ThumbRow>
            ))}
          </ThumbList>
        </ThumbPane>
        <ScrollBar $w={28} $h={1214}>
          <ScrollButton><Arrow up /></ScrollButton>
          <ScrollThumb $before={391} $size={565} />
          <ScrollButton><Arrow /></ScrollButton>
        </ScrollBar>
        <Editor>
          <Stage>
            <SlidePaper>
              <Slide
                title="I2C时序基本单元"
                items={[[
                  '接收一个字节：SCL低电平期间，从机将数据位依次放到SDA线上',
                  '（高位先行），然后释放SCL，主机将在SCL高电平期间读取数据位，',
                  '所以SCL高电平期间SDA不允许有数据变化，依次循环上述过程8次，',
                  <React.Fragment key="last">即可接收一个字节（<Highlight>主机在接收之前，需要释放SDA</Highlight>）</React.Fragment>,
                ]]}
                frame={<Frame />}
              >
                <Timing />
              </Slide>
            </SlidePaper>
          </Stage>
          <RightRail>
            <ScrollBar $w={30} $h={1108}>
              <ScrollButton><Arrow up /></ScrollButton>
              <ScrollThumb $before={980} $size={31} />
              <ScrollButton><Arrow /></ScrollButton>
            </ScrollBar>
            <PageArrows>
              <svg width="14" height="50" viewBox="0 0 14 50" fill="#6f6f6f"><path d="M0 8L7 0L14 8ZM0 15L7 7L14 15ZM0 35H14L7 43ZM0 42H14L7 50Z" /></svg>
            </PageArrows>
          </RightRail>
        </Editor>
      </Workspace>
      <Status />
      <Tasks />

      <Cursor width="26" height="40" viewBox="0 0 26 40"><path d="M2 3V35L9 28.5L14 38L19 36L15 26.5H24Z" fill="#fff" stroke="#333" strokeWidth="1.8" /></Cursor>
      <GhostTitle>STM32入门教程-2023版 细致讲解 中文字幕</GhostTitle>
      <Uploader>江科大自化协</Uploader>
      <BiliLogo width="200" height="92" viewBox="0 0 200 92" fill="#f0d8d0" fillOpacity="0.9">
        {[0, 94].map(x => (
          <g key={x} transform={`translate(${x} 0)`}>
            <path fillRule="evenodd" d="M5.5 12L19.5 7.5L21.5 59C36 57 49 63 58 70C54 80 38 86 17 88ZM28 68C30 72 29 76 27 80C34 78 40 75 44 71C39 69 33 67 28 68Z" />
            <path d="M68 17H78L83 79L76 80ZM59 50L66 49L73 80L63 82ZM85 50H95L96 82L88 83Z" />
            <path d="M60 34L66 32L68 45L62 46ZM84 33H95V46H86Z" />
          </g>
        ))}
      </BiliLogo>
      <Subtitle>注意，主机在接收之前，需要释放<SubtitleLatin>SDA</SubtitleLatin></Subtitle>
      <Progress width="2560" height="90" viewBox="0 1220 2560 90">
        <path d="M23 1280Q35 1276 50 1276H330Q370 1276 385 1272Q400 1266 415 1272Q425 1277 440 1277H490Q508 1276 516 1270Q524 1265 534 1270Q550 1277 570 1276H1030C1045 1277 1048 1240 1056 1239C1064 1242 1066 1275 1080 1277H1170Q1220 1268 1260 1276H1409V1290H23Z" fill="rgba(105,206,239,0.37)" />
        <path d="M1409 1277H1830Q1900 1271 1960 1275Q2010 1274 2020 1272Q2035 1264 2050 1276H2210Q2250 1263 2290 1274Q2320 1269 2350 1277H2540V1290H1409Z" fill="rgba(255,255,255,0.25)" />
        <rect x="23" y="1294" width="1387" height="7" fill="rgba(0,161,235,0.3)" />
        <rect x="1410" y="1290" width="1090" height="7" fill="rgba(255,255,255,0.3)" />
        <path d="M2537 1257V1286M2529 1266L2537 1275L2531 1281M2541 1258L2550 1267L2541 1276" stroke="#fff" strokeWidth="3" fill="#fff" />
      </Progress>
      <PlayBadge width="134" height="124" viewBox="2370 1120 134 124">
        <path d="M2412 1134Q2415 1130 2419 1133L2429 1145H2446L2455 1133Q2460 1129 2463 1134Q2463 1139 2459 1145Q2475 1145 2481 1149Q2488 1154 2488 1186Q2488 1216 2484 1221Q2480 1228 2437 1228Q2394 1228 2390 1221Q2386 1216 2386 1186Q2386 1154 2393 1149Q2399 1145 2415 1145Q2411 1139 2412 1134Z" fill="#fdfdfd" />
        <path d="M2422 1171Q2424 1166 2429 1169L2454 1184Q2458 1187 2454 1190L2429 1206Q2424 1208 2422 1203Q2420 1187 2422 1171Z" fill="#eaeaea" stroke="#bcbcbc" strokeWidth="1.5" />
      </PlayBadge>
    </Screen>
  </>
);

export default App;
